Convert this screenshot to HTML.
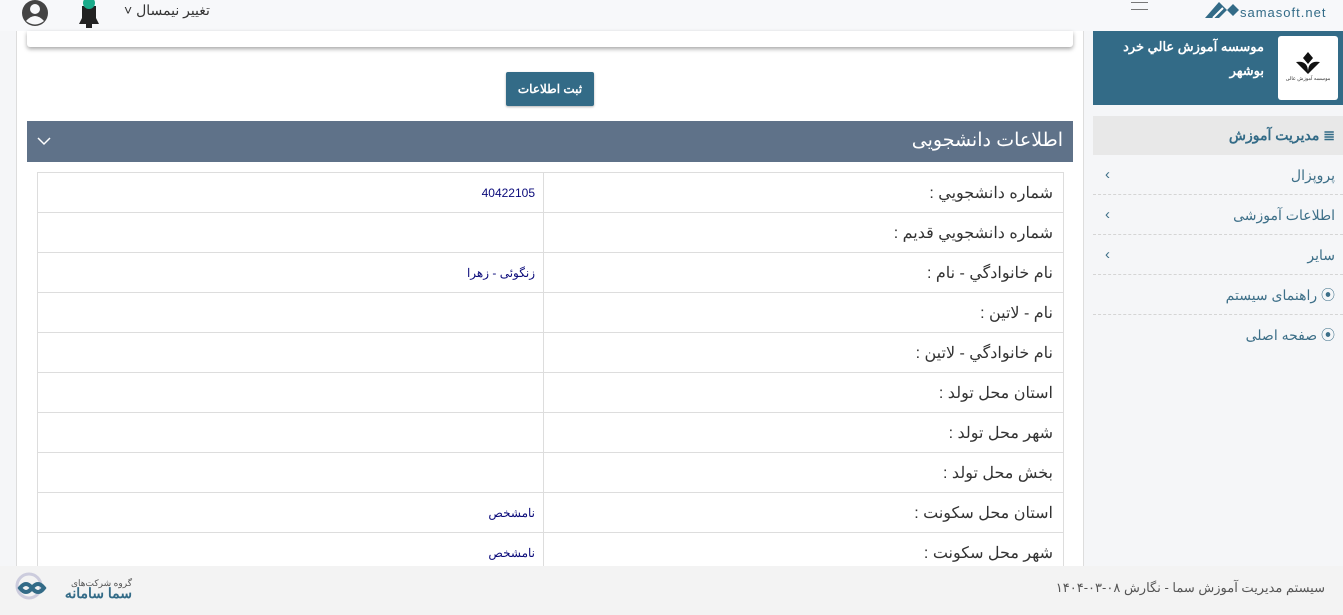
<!DOCTYPE html>
<html lang="fa"><head><meta charset="utf-8">
<style>
*{box-sizing:border-box;margin:0;padding:0}
body{width:1343px;height:615px;overflow:hidden;background:#f5f6f8;font-family:"Liberation Sans","Noto Sans CJK SC",sans-serif;position:relative;color:#333}
.abs{position:absolute}
.top{left:0;top:0;width:1343px;height:31px;background:#f7f8fa}
.main{left:16px;top:31px;width:1068px;height:535px;background:#fff;border-left:1px solid #ddd;border-right:1px solid #ddd}
.card{left:27px;top:31px;width:1046px;height:16px;background:#fff;box-shadow:0 2px 4px rgba(0,0,0,.35);border-radius:0 0 3px 3px}
.btn{left:506px;top:72px;width:88px;height:34px;background:#336b87;color:#fff;font-size:12px;font-weight:bold;text-align:center;line-height:34px;border-radius:2px;box-shadow:0 1px 2px rgba(0,0,0,.3)}
.ph{left:27px;top:121px;width:1046px;height:41px;background:#5f7289;color:#fff;font-size:19px;direction:rtl;padding-right:10px;line-height:40px}
table{position:absolute;left:37px;top:172px;width:1027px;border-collapse:collapse;direction:rtl}
td{border:1px solid #ddd;height:40px;padding:0 10px;font-size:16px;color:#333}
td.v{font-size:12px;color:#0a0a7a;width:506px;padding-right:8px}
.side{left:1093px;top:31px;width:250px;height:535px;background:#f5f6f8}
.ban{left:1093px;top:31px;width:250px;height:74px;background:#336b87}
.logo{left:1278px;top:36px;width:60px;height:64px;background:#fff;border-radius:3px}
.bant{right:79px;top:35px;width:150px;color:#fff;font-size:13px;font-weight:bold;direction:rtl;line-height:24px;text-align:right}
.mh{left:1093px;top:116px;width:250px;height:39px;background:#e8e8e8;direction:rtl;padding-right:8px;line-height:39px;font-size:14px;font-weight:bold;color:#336b87}
.mi{left:1093px;width:250px;height:40px;border-bottom:1px dashed #d5d5d5;direction:rtl;padding-right:8px;line-height:40px;font-size:14px;color:#3d6f88}
.mi .ch{position:absolute;left:12px;top:0;font-size:15px}
.foot{left:0;top:566px;width:1343px;height:49px;background:#f3f3f3}
</style></head><body>
<div class="abs top"></div>
<div class="abs main"></div>
<div class="abs card"></div>
<div class="abs btn">ثبت اطلاعات</div>
<div class="abs ph">اطلاعات دانشجویی</div>
<svg class="abs" style="left:37px;top:136px" width="14" height="10"><path d="M1 2 L7 8 L13 2" fill="none" stroke="#fff" stroke-width="1.5"/></svg>
<table>
<tr><td>شماره دانشجويي :</td><td class="v">40422105</td></tr>
<tr><td>شماره دانشجويي قديم :</td><td class="v"></td></tr>
<tr><td>نام خانوادگي - نام :</td><td class="v">زنگوئی - زهرا</td></tr>
<tr><td>نام - لاتين :</td><td class="v"></td></tr>
<tr><td>نام خانوادگي - لاتين :</td><td class="v"></td></tr>
<tr><td>استان محل تولد :</td><td class="v"></td></tr>
<tr><td>شهر محل تولد :</td><td class="v"></td></tr>
<tr><td>بخش محل تولد :</td><td class="v"></td></tr>
<tr><td>استان محل سكونت :</td><td class="v">نامشخص</td></tr>
<tr><td>شهر محل سكونت :</td><td class="v">نامشخص</td></tr>
</table>
<div class="abs side"></div>
<div class="abs ban"></div>
<div class="abs logo"><svg width="60" height="64"><path d="M30 16 L35 22 L30 28 L25 22Z M18 26 Q30 24 30 36 Q30 24 42 26 Q34 34 30 38 Q26 34 18 26Z" fill="#111"/><text x="30" y="44" font-size="5" text-anchor="middle" fill="#333">موسسه آموزش عالی</text></svg></div>
<div class="abs bant">موسسه آموزش عالي خرد بوشهر</div>
<div class="abs mh">≣ مدیریت آموزش</div>
<div class="abs mi" style="top:155px">پروپزال<span class="ch">›</span></div>
<div class="abs mi" style="top:195px">اطلاعات آموزشی<span class="ch">›</span></div>
<div class="abs mi" style="top:235px">سایر<span class="ch">›</span></div>
<div class="abs mi" style="top:275px">⦿ راهنمای سیستم</div>
<div class="abs mi" style="top:315px;border-bottom:none">⦿ صفحه اصلی</div>
<div class="abs" style="left:1131px;top:2px;width:17px;height:8px;border-top:1px solid #777;border-bottom:1px solid #777"></div>
<svg class="abs" style="left:1205px;top:0" width="34" height="18"><path d="M0 18 L14 2 L22 10 L28 4 L34 10 L28 16 L22 10 L14 18Z" fill="#336b87"/><path d="M8 18 L18 8" stroke="#fff" stroke-width="2"/></svg>
<div class="abs" style="left:1240px;top:5px;font-size:13px;color:#336b87;letter-spacing:1px">samasoft.net</div>
<svg class="abs" style="left:21px;top:0" width="28" height="27"><circle cx="14" cy="13" r="13" fill="#444"/><circle cx="14" cy="9" r="5" fill="#f7f8fa"/><path d="M5 21 Q14 11 23 21 Q14 28 5 21Z" fill="#f7f8fa"/></svg>
<svg class="abs" style="left:75px;top:0" width="28" height="30"><path d="M4 24 L24 24 L21 18 L21 6 L7 6 L7 18Z" fill="#222"/><rect x="11" y="24" width="6" height="4" fill="#222"/><circle cx="14" cy="3" r="6" fill="#1aab8a"/></svg>
<div class="abs" style="left:124px;top:2px;font-size:14px;color:#333">˅ تغيير نيمسال</div>
<div class="abs foot"></div>
<svg class="abs" style="left:12px;top:572px" width="44" height="32"><circle cx="17" cy="14" r="12" fill="none" stroke="#ccd" stroke-width="3"/><path d="M8 16 Q14 8 20 16 Q26 24 32 16 Q26 8 20 16 Q14 24 8 16Z" fill="none" stroke="#336b87" stroke-width="4"/></svg>
<div class="abs" style="left:58px;top:578px;width:74px;direction:rtl;font-size:9px;color:#555;line-height:10px">گروه شرکت‌های<br><b style="font-size:14px;color:#336b87">سما سامانه</b></div>
<div class="abs" style="right:18px;top:580px;direction:rtl;font-size:13px;color:#555">سیستم مدیریت آموزش سما - نگارش <span style="direction:ltr;unicode-bidi:embed">۱۴۰۴-۰۳-۰۸</span></div>
</body></html>
